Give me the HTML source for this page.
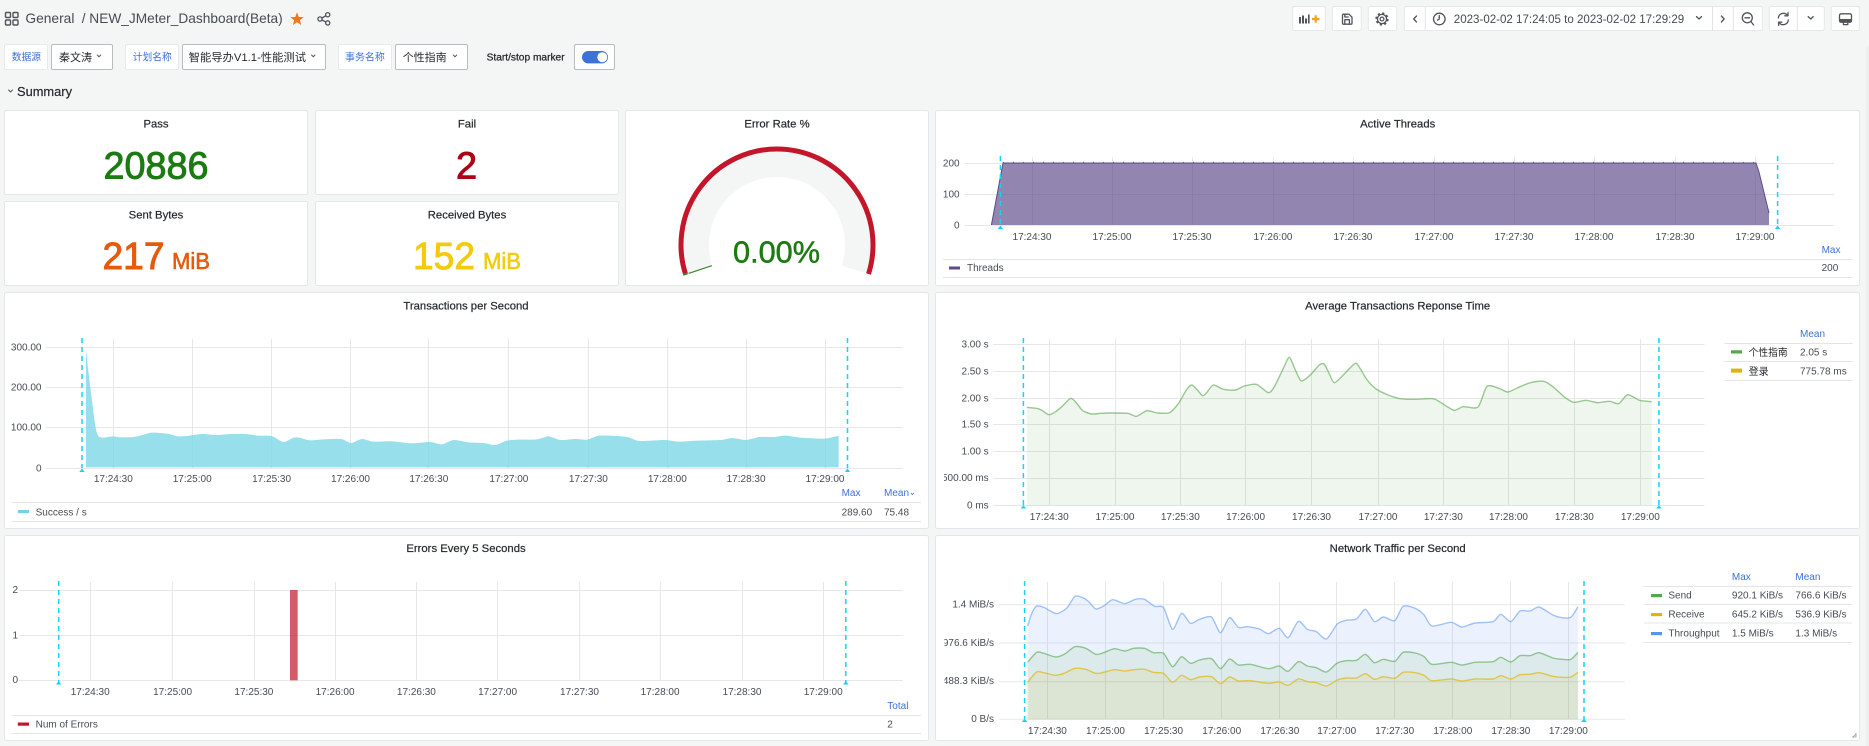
<!DOCTYPE html>
<html><head><meta charset="utf-8"><title>NEW_JMeter_Dashboard(Beta)</title>
<style>
html,body{margin:0;padding:0;background:#f4f5f5;overflow:hidden}
svg{display:block}
text{font-family:"Liberation Sans","Noto Sans CJK SC",sans-serif;font-size:10px;fill:#464c54}
.t{font-size:11.3px;fill:#24292e;text-anchor:middle;stroke:#24292e;stroke-width:.2}
.x{text-anchor:middle}
.y{text-anchor:end}
.b{fill:#3d71d9}
.p{fill:#fff;stroke:#e5e6e7;stroke-width:1}
.g{stroke:#e6e7e8;stroke-width:1;fill:none}
.c{stroke:#12d4f5;stroke-width:1.5;stroke-dasharray:5 4;fill:none}
.tr{fill:#12d4f5}
.l{stroke:#e3e4e5;stroke-width:1;fill:none}
.ns{vector-effect:non-scaling-stroke}
.ic{fill:none;stroke:#52545c;stroke-width:1.3;stroke-linecap:round;stroke-linejoin:round}
.btn{fill:#fff;stroke:#e6e7e8}
.big{stroke-width:.9}
</style></head><body>
<svg width="1869" height="746" viewBox="0 0 1869 746" xmlns="http://www.w3.org/2000/svg">
<rect width="1869" height="746" fill="#f4f5f5"/>

<!-- header -->
<g class="ic" style="stroke-width:1.4">
<rect x="5.5" y="12.5" width="5" height="5" rx="1"/><rect x="13" y="12.5" width="5" height="5" rx="1"/>
<rect x="5.5" y="20" width="5" height="5" rx="1"/><rect x="13" y="20" width="5" height="5" rx="1"/>
</g>
<text x="25.4" y="23" style="font-size:14px" textLength="49" lengthAdjust="spacingAndGlyphs">General</text>
<text x="81.7" y="23" style="font-size:14px" textLength="201" lengthAdjust="spacingAndGlyphs">/ NEW_JMeter_Dashboard(Beta)</text>
<polygon points="297,12.3 298.8,17 303.8,17.1 299.9,20.2 301.2,25 297,22.2 292.9,25 294.2,20.2 290.3,17.1 295.3,17" fill="#eb7b18"/>
<g class="ic"><circle cx="320" cy="19" r="2.1"/><circle cx="327.7" cy="14.7" r="2.1"/><circle cx="327.7" cy="22.9" r="2.1"/><path d="M321.9 18 L325.8 15.8 M321.9 20 L325.8 21.9"/></g>

<!-- top toolbar -->
<rect class="btn" x="1292.7" y="6.5" width="32.6" height="24" rx="2"/>
<rect class="btn" x="1332.3" y="6.5" width="29" height="24" rx="2"/>
<rect class="btn" x="1368.3" y="6.5" width="28.4" height="24" rx="2"/>
<rect class="btn" x="1404.3" y="6.5" width="358" height="24" rx="2"/>
<path class="l" d="M1425.3 6.5V30.5M1712.5 6.5V30.5M1733.3 6.5V30.5M1797.3 6.5V30.5"/>
<rect class="btn" x="1769.3" y="6.5" width="55" height="24" rx="2"/>
<rect class="btn" x="1831.3" y="6.5" width="28" height="24" rx="2"/>
<path class="l" d="M1797.3 6.5V30.5"/>
<path d="M1299 17h2v6.5h-2zM1302 15.5h2v8h-2zM1305 18.5h2v5h-2zM1308 14.5h1.6v9h-1.6z" fill="#52545c"/>
<path d="M1315.7 15.2v7.6M1311.9 19h7.6" stroke="#f5a01f" stroke-width="2.2" fill="none"/>
<g class="ic">
<path d="M1342.5 15.2a1 1 0 0 1 1-1h5.5l3 3v6a1 1 0 0 1-1 1h-7.5a1 1 0 0 1-1-1z"/><path d="M1344.8 24v-4.3h4.6V24M1344.8 14.4v2.6h3.4"/>
<circle cx="1382" cy="19" r="4.6"/><circle cx="1382" cy="19" r="1.9"/>
<circle cx="1382" cy="19" r="5.8" stroke-width="1.7" stroke-dasharray="2.2 2.35" stroke-linecap="butt"/>
<path d="M1416.5 16 L1413.7 19 L1416.5 22"/>
<circle cx="1439.3" cy="19" r="5.8"/><path d="M1439.3 15.5V19l-1.8 1.1"/>
<path d="M1696.5 16.6 L1699 19 L1701.5 16.6"/>
<path d="M1721.4 16 L1724.2 19 L1721.4 22"/>
<circle cx="1747.3" cy="17.8" r="5"/><path d="M1745 17.8h4.6M1751 21.6 L1753.6 25"/>
<path d="M1778.3 18a5.2 5.2 0 0 1 9.3-2.6M1788.3 20a5.2 5.2 0 0 1-9.3 2.6"/><path d="M1788 12.6v3.2h-3.2M1778.6 25.4v-3.2h3.2"/>
<path d="M1808.2 16.6 L1810.7 19 L1813.2 16.6"/>
<rect x="1839.5" y="13.8" width="12" height="8.4" rx="1.5"/><path d="M1843.4 22.2v2.4h4.4v-2.4"/>
</g>
<rect x="1840" y="19" width="11" height="3" fill="#52545c"/>
<text x="1453.8" y="23" style="font-size:12px" textLength="230.4" lengthAdjust="spacingAndGlyphs">2023-02-02 17:24:05 to 2023-02-02 17:29:29</text>

<!-- variables -->
<g fill="#fff">
<rect x="4.5" y="44.5" width="43" height="25" rx="1.5" fill="#fff" stroke="#e8e9ea"/>
<rect x="51.5" y="44.5" width="61" height="25" rx="1.5" fill="#fff" stroke="#b9bcbf"/>
<rect x="125.5" y="44.5" width="53" height="25" rx="1.5" fill="#fff" stroke="#e8e9ea"/>
<rect x="182.5" y="44.5" width="143" height="25" rx="1.5" fill="#fff" stroke="#b9bcbf"/>
<rect x="338.5" y="44.5" width="53" height="25" rx="1.5" fill="#fff" stroke="#e8e9ea"/>
<rect x="395.5" y="44.5" width="72" height="25" rx="1.5" fill="#fff" stroke="#b9bcbf"/>
<rect x="574.5" y="44.5" width="40" height="25" rx="1.5" fill="#fff" stroke="#b9bcbf"/>
</g>
<text class="b" x="11.7" y="60.5" textLength="29.3" lengthAdjust="spacingAndGlyphs">数据源</text>
<text x="59" y="60.8" style="font-size:11px;fill:#24292e">秦文涛</text>
<text class="b" x="132.7" y="60.5" textLength="39" lengthAdjust="spacingAndGlyphs">计划名称</text>
<text x="188.7" y="60.8" style="font-size:11px;fill:#24292e" textLength="117.3" lengthAdjust="spacingAndGlyphs">智能导办V1.1-性能测试</text>
<text class="b" x="345" y="60.5" textLength="39.8" lengthAdjust="spacingAndGlyphs">事务名称</text>
<text x="402.7" y="60.8" style="font-size:11px;fill:#24292e">个性指南</text>
<g class="ic" style="stroke-width:1"><path d="M97.3 55 L99 56.8 L100.7 55M311.6 55 L313.3 56.8 L315 55M453.3 55 L455 56.8 L456.7 55M8.6 90 L10.5 92 L12.4 90"/></g>
<text x="486.6" y="60.5" style="fill:#24292e;stroke:#24292e;stroke-width:.25" textLength="78" lengthAdjust="spacingAndGlyphs">Start/stop marker</text>
<rect x="582" y="51" width="26" height="12.4" rx="6.2" fill="#3d71d9"/>
<circle cx="602.3" cy="57.2" r="5" fill="#fff"/>
<text x="17" y="96" style="font-size:13px;fill:#24292e;stroke:#24292e;stroke-width:.2" textLength="55" lengthAdjust="spacingAndGlyphs">Summary</text>

<!-- panels -->
<rect class="p" x="4.5" y="110.5" width="303" height="84" rx="2"/>
<rect class="p" x="315.5" y="110.5" width="303" height="84" rx="2"/>
<rect class="p" x="4.5" y="201.5" width="303" height="84" rx="2"/>
<rect class="p" x="315.5" y="201.5" width="303" height="84" rx="2"/>
<rect class="p" x="625.5" y="110.5" width="303" height="175" rx="2"/>
<rect class="p" x="935.5" y="110.5" width="924" height="175" rx="2"/>
<rect class="p" x="4.5" y="292.5" width="924" height="236" rx="2"/>
<rect class="p" x="935.5" y="292.5" width="924" height="236" rx="2"/>
<rect class="p" x="4.5" y="535.5" width="924" height="205" rx="2"/>
<rect class="p" x="935.5" y="535.5" width="924" height="205" rx="2"/>

<!-- stats -->
<text class="t" x="156" y="127.3">Pass</text>
<text class="t" x="467" y="127.3">Fail</text>
<text class="t" x="156" y="218.3">Sent Bytes</text>
<text class="t" x="467" y="218.3">Received Bytes</text>
<text class="big" x="103.5" y="178.3" style="font-size:38px;fill:#1c7a12;stroke:#1c7a12" textLength="105" lengthAdjust="spacingAndGlyphs">20886</text>
<text class="big" x="456" y="178.3" style="font-size:38px;fill:#ad0317;stroke:#ad0317">2</text>
<text class="big" x="102.5" y="269.2" style="font-size:38px;fill:#e8590c;stroke:#e8590c" textLength="62" lengthAdjust="spacingAndGlyphs">217</text>
<text x="172" y="269.2" style="font-size:23px;fill:#e8590c;stroke:#e8590c;stroke-width:.6" textLength="38" lengthAdjust="spacingAndGlyphs">MiB</text>
<text class="big" x="413" y="269.2" style="font-size:38px;fill:#f2cc0c;stroke:#f2cc0c" textLength="62" lengthAdjust="spacingAndGlyphs">152</text>
<text x="483" y="269.2" style="font-size:23px;fill:#f2cc0c;stroke:#f2cc0c;stroke-width:.6" textLength="38" lengthAdjust="spacingAndGlyphs">MiB</text>

<!-- gauge -->
<text class="t" x="777" y="127.3">Error Rate %</text>
<path d="M687.9 273.3A93.5 93.5 0 1 1 866.1 273.3L841.8 265.6A68 68 0 1 0 712.2 265.6Z" fill="#f4f5f5"/>
<path d="M685.5 274A96 96 0 1 1 868.5 274" fill="none" stroke="#c4162a" stroke-width="5"/>
<path d="M688.6 273.4L711.8 265.7" stroke="#37872d" stroke-width="1.2"/>
<path d="M683.3 274.8L687.5 273.4" stroke="#37872d" stroke-width="2"/>
<text x="733" y="262.4" style="font-size:31px;fill:#1c7a12;stroke:#1c7a12;stroke-width:.5" textLength="87" lengthAdjust="spacingAndGlyphs">0.00%</text>

<!-- active threads -->
<text class="t" x="1397.7" y="127.3">Active Threads</text>
<path class="g" d="M964.5 163.5H1834M964.5 194.5H1834M964.5 225.5H1834M1032.5 157V225M1112.5 157V225M1192.5 157V225M1273.5 157V225M1353.5 157V225M1434.5 157V225M1514.5 157V225M1594.5 157V225M1675.5 157V225M1755.5 157V225"/>
<polygon points="991.4,225 1003,163 1756,163 1759,172 1769,213 1769,225" fill="#5f4b8b" fill-opacity=".68"/>
<path d="M991.4 225L1003 163H1756L1759 172L1769 213" fill="none" stroke="#5f4b8b" stroke-width="1"/>
<path d="M1003 162.2H1756" stroke="#7a689f" stroke-width=".7" stroke-dasharray="1 9" fill="none"/>
<path class="c" d="M1000.4 156V225M1777.6 156V225"/>
<path class="tr" d="M1000.4 225.5l2.7 3.5h-5.4zM1777.6 225.5l2.7 3.5h-5.4z"/>
<g>
<text class="y" x="959.6" y="166.5">200</text><text class="y" x="959.6" y="197.5">100</text><text class="y" x="959.6" y="228.5">0</text>
<text class="x" x="1032" y="240.2">17:24:30</text><text class="x" x="1112" y="240.2">17:25:00</text><text class="x" x="1192" y="240.2">17:25:30</text><text class="x" x="1273" y="240.2">17:26:00</text><text class="x" x="1353" y="240.2">17:26:30</text><text class="x" x="1434" y="240.2">17:27:00</text><text class="x" x="1514" y="240.2">17:27:30</text><text class="x" x="1594" y="240.2">17:28:00</text><text class="x" x="1675" y="240.2">17:28:30</text><text class="x" x="1755" y="240.2">17:29:00</text>
</g>
<path class="l" d="M943 259.5H1852.7M943 277.5H1852.7"/>
<rect x="949" y="266.5" width="11" height="3" fill="#5f4b8b"/>
<text x="967" y="271">Threads</text>
<text class="b" x="1821.6" y="253.2">Max</text>
<text x="1821.6" y="271">200</text>

<!-- TPS -->
<text class="t" x="466" y="309.5">Transactions per Second</text>
<path class="g" d="M46 347.5H902.5M46 387.5H902.5M46 427.5H902.5M46 468.5H902.5M113.5 339V468M192.5 339V468M271.5 339V468M350.5 339V468M428.5 339V468M508.5 339V468M588.5 339V468M667.5 339V468M746.5 339V468M825.5 339V468"/>
<g transform="translate(0,290) scale(.5931,.33333)">
<polygon class="sm" fill="#7ad6e6" fill-opacity=".78" points="145,532 145,180 155,330 165,436 190,439 205,442 225,441 240,435 255,428 270,429 285,432 300,439 315,438 340,432 365,435 390,432 415,432 435,437 458,438 478,456 495,443 505,443 522,451 545,448 575,447 592,459 610,447 630,455 660,454 695,460 725,456 745,463 765,450 790,457 815,459 835,465 855,452 875,449 905,448 925,439 945,450 970,447 990,449 1010,437 1040,438 1060,442 1078,453 1120,450 1145,455 1175,452 1215,450 1235,444 1258,450 1280,441 1305,441 1325,437 1350,443 1390,446 1414,437 1414,532"/>
</g>
<path class="c" d="M82 338V468M847.5 338V468"/>
<path class="tr" d="M82 468.5l2.7 3.5h-5.4zM847.5 468.5l2.7 3.5h-5.4z"/>
<text class="y" x="41.5" y="350.5">300.00</text><text class="y" x="41.5" y="390.5">200.00</text><text class="y" x="41.5" y="430.5">100.00</text><text class="y" x="41.5" y="471.5">0</text>
<text class="x" x="113.3" y="482.2">17:24:30</text><text class="x" x="192.2" y="482.2">17:25:00</text><text class="x" x="271.6" y="482.2">17:25:30</text><text class="x" x="350.5" y="482.2">17:26:00</text><text class="x" x="428.8" y="482.2">17:26:30</text><text class="x" x="508.9" y="482.2">17:27:00</text><text class="x" x="588.4" y="482.2">17:27:30</text><text class="x" x="667.3" y="482.2">17:28:00</text><text class="x" x="746.1" y="482.2">17:28:30</text><text class="x" x="825" y="482.2">17:29:00</text>
<path class="l" d="M12 502.5H921M12 521.5H921"/>
<rect x="17.8" y="510" width="11.2" height="3.2" fill="#73d3e6"/>
<text x="35.6" y="515.5">Success / s</text>
<text class="b" x="841.6" y="496.2">Max</text><text class="b" x="884" y="496.2">Mean</text>
<path d="M910.8 493L912.3 494.5L913.8 493" fill="none" stroke="#3d71d9" stroke-width=".8"/>
<text x="841.6" y="515.5">289.60</text><text x="884" y="515.5">75.48</text>

<!-- Response -->
<text class="t" x="1397.7" y="309.5">Average Transactions Reponse Time</text>
<path class="g" d="M993 344.5H1704.5M993 371.5H1704.5M993 398.5H1704.5M993 424.5H1704.5M993 451.5H1704.5M993 478.5H1704.5M993 505.5H1704.5M1049.5 339V505M1115.5 339V505M1180.5 339V505M1245.5 339V505M1311.5 339V505M1378.5 339V505M1443.5 339V505M1508.5 339V505M1574.5 339V505M1640.5 339V505"/>
<g transform="translate(930,290) scale(.5989,.33333)">
<polygon class="sm" fill="#56a64b" fill-opacity=".1" points="162,646 162,352 178,355 186,360 198,374 208,367 220,350 235,325 245,340 255,362 270,372 285,370 300,369 330,370 345,379 362,362 380,369 400,368 415,340 428,300 437,285 445,297 455,317 462,308 473,285 490,298 510,300 525,288 545,283 565,308 575,290 590,235 600,202 610,240 620,273 635,255 650,225 658,222 665,245 675,278 690,255 710,220 718,235 730,270 745,297 765,315 785,326 810,328 840,326 855,340 875,361 890,350 915,351 930,289 950,295 965,306 985,290 1005,277 1025,274 1040,290 1060,322 1075,337 1095,331 1115,338 1135,334 1150,341 1165,314 1185,331 1205,335 1205,646"/>
<polyline class="ns sm" fill="none" stroke="#56a64b" stroke-opacity=".6" stroke-width="1.4" stroke-linejoin="round" points="162,352 178,355 186,360 198,374 208,367 220,350 235,325 245,340 255,362 270,372 285,370 300,369 330,370 345,379 362,362 380,369 400,368 415,340 428,300 437,285 445,297 455,317 462,308 473,285 490,298 510,300 525,288 545,283 565,308 575,290 590,235 600,202 610,240 620,273 635,255 650,225 658,222 665,245 675,278 690,255 710,220 718,235 730,270 745,297 765,315 785,326 810,328 840,326 855,340 875,361 890,350 915,351 930,289 950,295 965,306 985,290 1005,277 1025,274 1040,290 1060,322 1075,337 1095,331 1115,338 1135,334 1150,341 1165,314 1185,331 1205,335"/>
</g>
<path class="c" d="M1023.4 338V505M1658.9 338V505"/>
<path class="tr" d="M1023.4 505l2.7 3.5h-5.4zM1658.9 505l2.7 3.5h-5.4z"/>
<clipPath id="cl"><rect x="944" y="330" width="60" height="190"/></clipPath>
<g clip-path="url(#cl)">
<text class="y" x="988.7" y="347.5">3.00 s</text><text class="y" x="988.7" y="374.5">2.50 s</text><text class="y" x="988.7" y="401.5">2.00 s</text><text class="y" x="988.7" y="427.5">1.50 s</text><text class="y" x="988.7" y="454.5">1.00 s</text><text class="y" x="988.7" y="481.2">500.00 ms</text><text class="y" x="988.7" y="508.5">0 ms</text>
</g>
<text class="x" x="1049.2" y="520.2">17:24:30</text><text class="x" x="1115" y="520.2">17:25:00</text><text class="x" x="1180.3" y="520.2">17:25:30</text><text class="x" x="1245.6" y="520.2">17:26:00</text><text class="x" x="1311.5" y="520.2">17:26:30</text><text class="x" x="1378" y="520.2">17:27:00</text><text class="x" x="1443.3" y="520.2">17:27:30</text><text class="x" x="1508.5" y="520.2">17:28:00</text><text class="x" x="1574.4" y="520.2">17:28:30</text><text class="x" x="1640.3" y="520.2">17:29:00</text>
<text class="b" x="1800" y="337.2">Mean</text>
<path class="l" d="M1724.6 343.5H1852.7M1724.6 361.5H1852.7M1724.6 380.5H1852.7"/>
<rect x="1731" y="350.3" width="11" height="3.2" fill="#56a64b"/>
<rect x="1731" y="368.6" width="11" height="4" fill="#e0b400"/>
<text x="1748.6" y="356" style="fill:#24292e" textLength="39" lengthAdjust="spacingAndGlyphs">个性指南</text>
<text x="1748.6" y="375" style="fill:#24292e">登录</text>
<text x="1800" y="355.5">2.05 s</text><text x="1800" y="374.5">775.78 ms</text>

<!-- Errors -->
<text class="t" x="466" y="552">Errors Every 5 Seconds</text>
<path class="g" d="M19 590.5H902.7M19 635.5H902.7M19 680.5H902.7M90.5 582V680M172.5 582V680M254.5 582V680M335.5 582V680M416.5 582V680M497.5 582V680M579.5 582V680M660.5 582V680M742.5 582V680M823.5 582V680"/>
<rect x="290" y="590" width="7.7" height="90.3" fill="#c4162a" fill-opacity=".7"/>
<path class="c" d="M58.7 581V682M845.8 581V682"/>
<path class="tr" d="M58.7 681l2.7 3.5h-5.4zM845.8 681l2.7 3.5h-5.4z"/>
<text class="y" x="18" y="593.2">2</text><text class="y" x="18" y="638.5">1</text><text class="y" x="18" y="683.2">0</text>
<text class="x" x="90.2" y="694.8">17:24:30</text><text class="x" x="172.6" y="694.8">17:25:00</text><text class="x" x="253.9" y="694.8">17:25:30</text><text class="x" x="335.1" y="694.8">17:26:00</text><text class="x" x="416.4" y="694.8">17:26:30</text><text class="x" x="497.6" y="694.8">17:27:00</text><text class="x" x="579.5" y="694.8">17:27:30</text><text class="x" x="660.1" y="694.8">17:28:00</text><text class="x" x="742" y="694.8">17:28:30</text><text class="x" x="823.2" y="694.8">17:29:00</text>
<path class="l" d="M12 715.5H921M12 733.5H921"/>
<rect x="17.8" y="722.5" width="11.2" height="3.2" fill="#c4162a"/>
<text x="35.6" y="727.5">Num of Errors</text>
<text class="b" x="887.3" y="709">Total</text>
<text x="887.3" y="727.5">2</text>

<!-- Network -->
<text class="t" x="1397.7" y="552">Network Traffic per Second</text>
<path class="g" d="M999 604.7H1624.7M999 643H1624.7M999 681.7H1624.7M999 719.3H1624.7M1047.5 582V719M1105.5 582V719M1163.5 582V719M1221.5 582V719M1279.5 582V719M1336.5 582V719M1394.5 582V719M1452.5 582V719M1510.5 582V719M1568.5 582V719"/>
<g transform="translate(930,530) scale(.5989,.33333)">
<polygon class="sm" fill="#5794f2" fill-opacity=".12" points="163,568 163,288 170,250 178,228 190,232 200,242 212,251 228,235 242,199 255,203 265,215 277,237 290,228 305,209 325,221 343,208 358,208 375,229 390,233 405,298 420,250 435,280 450,268 470,261 485,308 500,263 515,292 530,290 550,297 565,311 583,295 598,323 615,274 630,298 645,305 662,327 680,282 695,271 712,267 727,238 742,275 757,261 776,272 790,229 810,235 825,255 838,288 870,277 888,291 910,279 940,275 953,253 970,275 985,243 1002,243 1017,231 1040,255 1055,263 1070,262 1082,230 1082,568"/>
<polygon class="sm" fill="#56a64b" fill-opacity=".1" points="163,568 163,397 178,367 190,370 210,381 225,372 242,350 260,355 277,373 290,368 308,356 325,363 340,355 358,355 373,368 390,370 405,410 420,380 435,400 450,390 470,386 485,416 500,387 515,405 535,403 565,416 583,408 598,424 615,395 630,408 645,413 662,426 680,399 695,392 712,391 727,373 742,398 757,388 776,394 790,367 810,369 825,380 838,403 870,397 888,405 910,397 940,395 953,382 970,396 985,377 1002,377 1017,368 1040,384 1055,388 1070,388 1082,367 1082,568"/>
<polygon class="sm" fill="#e0b400" fill-opacity=".1" points="163,568 163,457 178,426 190,428 210,436 225,429 242,415 260,418 277,430 290,427 308,419 325,423 340,419 358,418 373,427 390,430 405,457 420,436 435,449 450,441 470,440 485,461 500,441 515,453 535,452 565,460 583,456 598,466 615,447 630,455 645,458 662,468 680,450 695,444 712,444 727,431 742,448 757,440 776,445 790,427 810,428 825,436 838,452 870,447 888,453 910,447 940,447 953,437 970,447 985,434 1002,433 1017,428 1040,439 1055,442 1070,441 1082,427 1082,568"/>
<polyline class="ns sm" fill="none" stroke="#5794f2" stroke-opacity=".55" stroke-width="1.4" stroke-linejoin="round" points="163,288 170,250 178,228 190,232 200,242 212,251 228,235 242,199 255,203 265,215 277,237 290,228 305,209 325,221 343,208 358,208 375,229 390,233 405,298 420,250 435,280 450,268 470,261 485,308 500,263 515,292 530,290 550,297 565,311 583,295 598,323 615,274 630,298 645,305 662,327 680,282 695,271 712,267 727,238 742,275 757,261 776,272 790,229 810,235 825,255 838,288 870,277 888,291 910,279 940,275 953,253 970,275 985,243 1002,243 1017,231 1040,255 1055,263 1070,262 1082,230"/>
<polyline class="ns sm" fill="none" stroke="#56a64b" stroke-opacity=".6" stroke-width="1.4" stroke-linejoin="round" points="163,397 178,367 190,370 210,381 225,372 242,350 260,355 277,373 290,368 308,356 325,363 340,355 358,355 373,368 390,370 405,410 420,380 435,400 450,390 470,386 485,416 500,387 515,405 535,403 565,416 583,408 598,424 615,395 630,408 645,413 662,426 680,399 695,392 712,391 727,373 742,398 757,388 776,394 790,367 810,369 825,380 838,403 870,397 888,405 910,397 940,395 953,382 970,396 985,377 1002,377 1017,368 1040,384 1055,388 1070,388 1082,367"/>
<polyline class="ns sm" fill="none" stroke="#e0b400" stroke-opacity=".65" stroke-width="1.4" stroke-linejoin="round" points="163,457 178,426 190,428 210,436 225,429 242,415 260,418 277,430 290,427 308,419 325,423 340,419 358,418 373,427 390,430 405,457 420,436 435,449 450,441 470,440 485,461 500,441 515,453 535,452 565,460 583,456 598,466 615,447 630,455 645,458 662,468 680,450 695,444 712,444 727,431 742,448 757,440 776,445 790,427 810,428 825,436 838,452 870,447 888,453 910,447 940,447 953,437 970,447 985,434 1002,433 1017,428 1040,439 1055,442 1070,441 1082,427"/>
</g>
<path class="c" d="M1024.6 581V719M1584 581V719"/>
<path class="tr" d="M1024.6 718.5l2.7 3.5h-5.4zM1584 718.5l2.7 3.5h-5.4z"/>
<clipPath id="cn"><rect x="944.5" y="590" width="60" height="140"/></clipPath>
<g clip-path="url(#cn)">
<text class="y" x="994" y="607.5">1.4 MiB/s</text><text class="y" x="994" y="645.8">976.6 KiB/s</text><text class="y" x="994" y="684.2">488.3 KiB/s</text><text class="y" x="994" y="722.2">0 B/s</text>
</g>
<text class="x" x="1047.4" y="734.2">17:24:30</text><text class="x" x="1105.5" y="734.2">17:25:00</text><text class="x" x="1163.6" y="734.2">17:25:30</text><text class="x" x="1221.7" y="734.2">17:26:00</text><text class="x" x="1279.8" y="734.2">17:26:30</text><text class="x" x="1336.7" y="734.2">17:27:00</text><text class="x" x="1394.7" y="734.2">17:27:30</text><text class="x" x="1452.8" y="734.2">17:28:00</text><text class="x" x="1510.9" y="734.2">17:28:30</text><text class="x" x="1568.4" y="734.2">17:29:00</text>
<text class="b" x="1731.9" y="580">Max</text><text class="b" x="1795.4" y="580">Mean</text>
<path class="l" d="M1644 586.5H1852.3M1644 604.5H1852.3M1644 623H1852.3M1644 642.5H1852.3"/>
<rect x="1651" y="594" width="11" height="3.2" fill="#56a64b"/>
<rect x="1651" y="613" width="11" height="3.2" fill="#e0b400"/>
<rect x="1651" y="632" width="11" height="3.2" fill="#5794f2"/>
<text x="1668.4" y="598.3">Send</text><text x="1668.4" y="617.5">Receive</text><text x="1668.4" y="636.5">Throughput</text>
<text x="1731.9" y="598.3">920.1 KiB/s</text><text x="1795.4" y="598.3">766.6 KiB/s</text>
<text x="1731.9" y="617.5">645.2 KiB/s</text><text x="1795.4" y="617.5">536.9 KiB/s</text>
<text x="1731.9" y="636.5">1.5 MiB/s</text><text x="1795.4" y="636.5">1.3 MiB/s</text>
<path d="M1856 733v4h-4M1853 737l3-3" fill="none" stroke="#9a9c9f" stroke-width=".8"/>
<rect x="1866" y="46" width="3" height="700" fill="#eeefef"/>
</svg>
<script>
document.querySelectorAll('.sm').forEach(function(el){
  var pts=el.getAttribute('points').trim().split(/\s+/).map(function(p){return p.split(',').map(Number)});
  var closed=el.tagName.toLowerCase()==='polygon';
  var c=closed?pts.slice(1,-1):pts;
  var d='M'+c[0][0]+' '+c[0][1];
  for(var i=0;i<c.length-1;i++){
    var p0=c[i?i-1:0],p1=c[i],p2=c[i+1],p3=c[Math.min(i+2,c.length-1)];
    var t=8;
    d+='C'+(p1[0]+(p2[0]-p0[0])/t).toFixed(1)+' '+(p1[1]+(p2[1]-p0[1])/t).toFixed(1)+' '+(p2[0]-(p3[0]-p1[0])/t).toFixed(1)+' '+(p2[1]-(p3[1]-p1[1])/t).toFixed(1)+' '+p2[0]+' '+p2[1];
  }
  if(closed){var a=pts[0],b=pts[pts.length-1];d='M'+a[0]+' '+a[1]+'L'+d.slice(1)+'L'+b[0]+' '+b[1]+'Z';}
  var n=document.createElementNS('http://www.w3.org/2000/svg','path');
  for(var j=0;j<el.attributes.length;j++){var at=el.attributes[j];if(at.name!=='points')n.setAttribute(at.name,at.value);}
  n.setAttribute('d',d);
  el.parentNode.replaceChild(n,el);
});
</script>
</body></html>
